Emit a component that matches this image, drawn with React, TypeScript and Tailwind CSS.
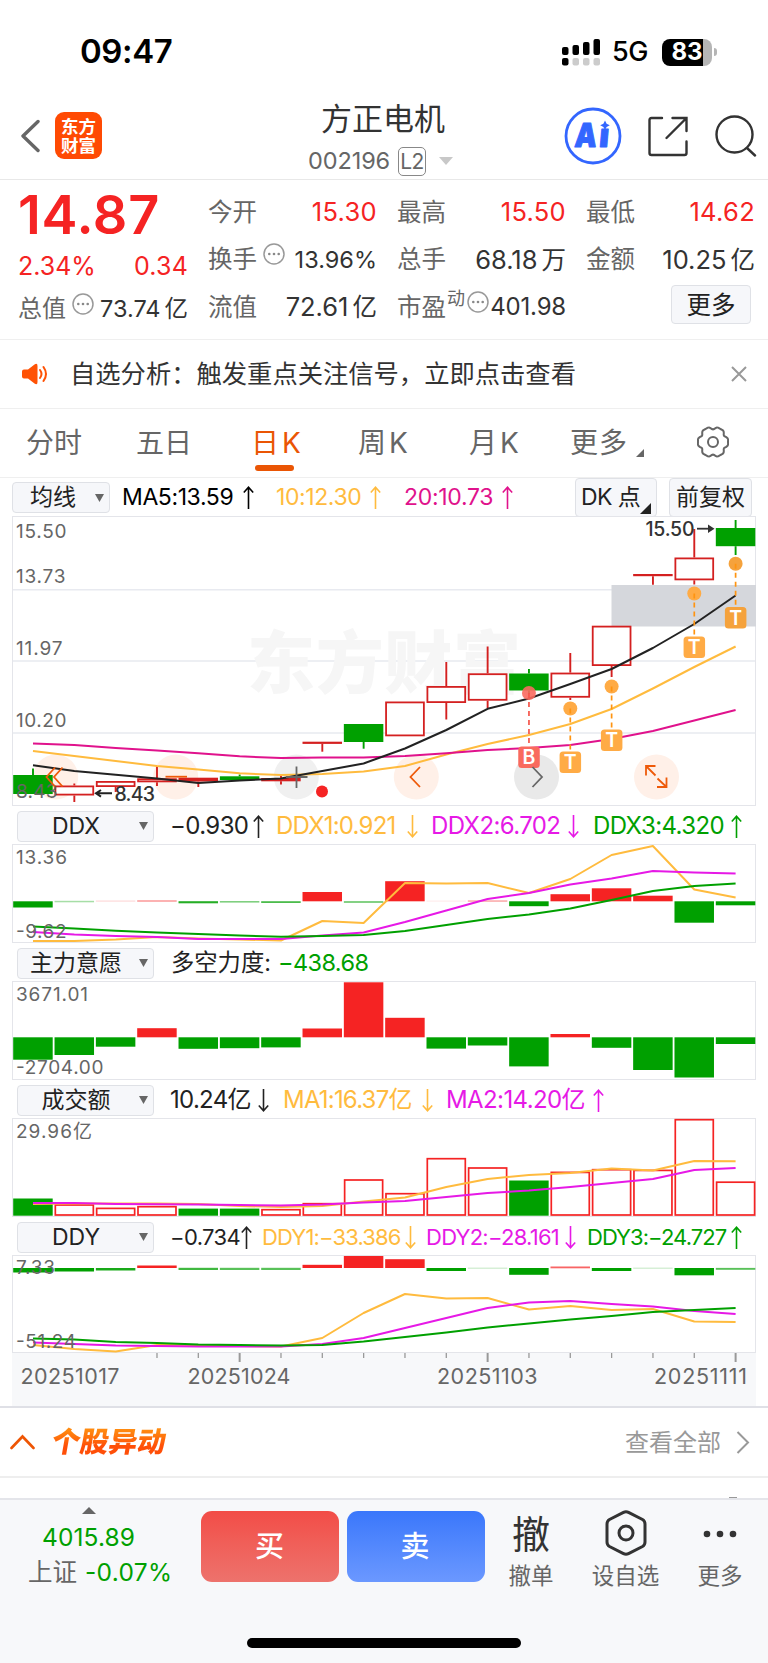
import React from 'react';

const GREEN = '#00a000';
const RED = '#f52323';
const CANDLE = '#d42020';
const YELLOW = '#ffbb3e';
const MAGENTA = '#e619e6';
const PINK = '#e0128c';

const STEP = 41.33;
const cx = (i: number) => 33 + STEP * i;
const line = (ys: number[]) => ys.map((y, i) => `${cx(i).toFixed(1)},${y}`).join(' ');

type Candle = { top: number; bottom: number; high?: number; low?: number; up?: boolean; flat?: boolean };

const candles: Candle[] = [
  { top: 775, bottom: 794, high: 768.5 },
  { top: 785.5, bottom: 795.5, high: 783.5, low: 802, up: true },
  { top: 781, bottom: 787, low: 792, up: true },
  { top: 778.3, bottom: 782.3, high: 766, low: 786, up: true },
  { top: 777.7, bottom: 781.5, low: 787, up: true, flat: true },
  { top: 776.3, bottom: 780, high: 774.5 },
  { top: 778, bottom: 781.3, high: 776, low: 784.5, up: true, flat: true },
  { top: 741.7, bottom: 743.9, low: 751.7, up: true, flat: true },
  { top: 724, bottom: 742, low: 748.7 },
  { top: 701.5, bottom: 736.3, up: true },
  { top: 686, bottom: 703, high: 662, low: 719.5, up: true },
  { top: 673.3, bottom: 700.7, high: 646.5, low: 708, up: true },
  { top: 673.5, bottom: 690.5, high: 669, low: 694 },
  { top: 672.6, bottom: 697.7, high: 653, low: 700, up: true },
  { top: 625.7, bottom: 666, low: 677, up: true },
  { top: 574, bottom: 576.2, low: 584.7, up: true, flat: true },
  { top: 557.5, bottom: 580.3, high: 529, low: 584.5, up: true },
  { top: 528, bottom: 546.2, high: 520, low: 555 },
];

const ma5 = [765.3, 771, 774.7, 778.5, 783, 780.5, 778.5, 771, 763.5, 748.5, 730, 708.8, 698.5, 684, 669, 648, 624, 595.5];
const ma10 = [751, 756, 761, 766, 769.5, 773.3, 775, 774, 771.5, 766, 754.5, 744, 735, 724, 709, 688.5, 667, 646.5];
const ma20 = [743.5, 745, 748, 750.5, 753.3, 756.3, 758, 757.6, 757.6, 756, 753.3, 750, 748, 745, 739, 731, 720.5, 710];

const signals = [
  { i: 12, dot: 693, box: 746.5, t: 'B', c: '#f96a5e' },
  { i: 13, dot: 708.5, box: 751.5, t: 'T', c: '#ffab45' },
  { i: 14, dot: 686.5, box: 729.5, t: 'T', c: '#ffab45' },
  { i: 16, dot: 593.5, box: 636.5, t: 'T', c: '#ffab45' },
  { i: 17, dot: 563.7, box: 607, t: 'T', c: '#f5a23c' },
];

type Bar = [number, number, string, number?];

const ddxBars: Bar[] = [
  [901.3, 907.5, GREEN], [900.8, 902.3, GREEN, 0.35], [900.4, 901.8, RED, 0.15], [900, 902, RED, 0.35],
  [901.2, 903.3, GREEN, 0.85], [901, 902.6, GREEN, 0.5], [901.2, 903, GREEN, 0.7], [892, 901.3, RED],
  [901.2, 902.8, GREEN, 0.6], [881.2, 901.3, RED], [900.6, 901.6, RED, 0.1], [900.3, 901.8, RED, 0.4],
  [901.3, 906.2, GREEN], [894.2, 901.3, RED], [888.3, 901.3, RED], [895.7, 901.3, RED], [901.3, 922.7, GREEN], [901.3, 905.3, GREEN],
];

const forceBars: Bar[] = [
  [1037.3, 1059.7, GREEN], [1037.3, 1055, GREEN], [1037.3, 1046.7, GREEN], [1028.2, 1037.3, RED], [1037.3, 1048.8, GREEN],
  [1037.3, 1048.2, GREEN], [1037.3, 1047.4, GREEN], [1028.5, 1037.3, RED], [982.3, 1037.3, RED], [1017.8, 1037.3, RED],
  [1037.3, 1048.6, GREEN], [1037.3, 1045.5, GREEN], [1037.3, 1066.4, GREEN], [1034, 1037.3, RED], [1037.3, 1047.8, GREEN],
  [1037.3, 1070, GREEN], [1037.3, 1077.5, GREEN], [1037.3, 1044, GREEN],
];

const volumes: [number, boolean][] = [
  [1198.5, false], [1204.3, true], [1207.7, true], [1206, true], [1208.6, false], [1208.6, false], [1209, true], [1203, true], [1179.3, true],
  [1193, true], [1158, true], [1167.3, true], [1180.5, false], [1171.7, true], [1169, true], [1169.7, true], [1119, true], [1181.5, true],
];

const ddyBars: Bar[] = [
  [1268, 1272.5, GREEN], [1268, 1271.5, GREEN], [1268, 1270.5, GREEN, 0.9], [1265.5, 1268, RED], [1267.8, 1270, GREEN, 0.75],
  [1267.8, 1270, GREEN, 0.65], [1267.8, 1270, GREEN, 0.65], [1264.8, 1268, RED], [1256, 1268, RED], [1259.2, 1268, RED],
  [1268, 1271, GREEN], [1267.6, 1268.8, GREEN, 0.2], [1268, 1274.8, GREEN], [1266.5, 1268.3, RED, 0.7], [1268, 1271, GREEN],
  [1267.6, 1268.8, GREEN, 0.2], [1268, 1275.3, GREEN], [1267.9, 1269.8, GREEN, 0.65],
];

const Bars: React.FC<{ data: Bar[] }> = ({ data }) => (
  <>
    {data.map(([y1, y2, fill, opacity], i) => (
      <rect key={i} x={cx(i) - 19.8} y={y1} width={39.5} height={y2 - y1} fill={fill} opacity={opacity ?? 1} />
    ))}
  </>
);

const Curve: React.FC<{ ys: number[]; color: string }> = ({ ys, color }) => (
  <polyline points={line(ys)} fill="none" stroke={color} strokeWidth={2} strokeLinejoin="round" />
);

const AxisText: React.FC<{ x: number; y: number; w: number; size?: number; children: string }> = ({ x, y, w, size = 19, children }) => (
  <text x={x} y={y} textLength={w} fontSize={size} fill="#666">{children}</text>
);

const Panel: React.FC<{ top: number; height: number; children: React.ReactNode }> = ({ top, height, children }) => (
  <svg className="block w-[768px]" height={height} viewBox={`0 ${top} 768 ${height}`}>
    <rect x={12.5} y={top + 0.5} width={743} height={height - 1} fill="#fff" stroke="#e4e5ea" />
    {children}
  </svg>
);

const Picker: React.FC<{ label: string }> = ({ label }) => (
  <div className="flex h-[31px] w-[137px] shrink-0 items-center rounded-[4px] border border-[#dfe1e6] bg-[#f6f7fa] text-[23px] text-[#222]">
    <span className="w-[116px] text-center leading-none">{label}</span>
    <svg width="9" height="8" viewBox="0 0 9 8" className="ml-[5px]"><path d="M0 0h9L4.500 8z" fill="#666" /></svg>
  </div>
);

const Arrow: React.FC<{ down?: boolean; className?: string }> = ({ down, className = '' }) => (
  <svg width="11" height="23" viewBox="0 0 11 23" className={`shrink-0 ${className}`} fill="none" stroke="currentColor" strokeWidth="1.6">
    <path d={down ? 'M5.500 0v22M.8 16.500l4.700 5.200 4.700-5.200' : 'M5.500 23V1M.8 6.500l4.700-5.200 4.700 5.200'} />
  </svg>
);

const More: React.FC<{ className?: string }> = ({ className = '' }) => (
  <svg width="22" height="22" viewBox="0 0 22 22" className={`shrink-0 ${className}`}>
    <circle cx="11" cy="11" r="10" fill="none" stroke="#999" strokeWidth="1.500" />
    <g fill="#888"><circle cx="6.300" cy="11" r="1.300" /><circle cx="11" cy="11" r="1.300" /><circle cx="15.700" cy="11" r="1.300" /></g>
  </svg>
);

// six wide lobes with narrow dips between them
const gear = Array.from({ length: 73 }, (_, k) => {
  const a = (k * 5 * Math.PI) / 180;
  const r = 14.4 + 1.2 * Math.cos(6 * a) - 0.6 * Math.cos(12 * a);
  return `${k ? 'L' : 'M'}${(16 + r * Math.cos(a)).toFixed(2)} ${(16 + r * Math.sin(a)).toFixed(2)}`;
}).join('') + 'Z';

const Header: React.FC = () => (
  <header className="h-[180px] border-b border-[#e8e8e8]">
    <div className="flex h-[104px] items-center">
      <span className="ml-[80px] w-[480px] text-[33px] font-semibold tracking-[-0.4px] text-black">09:47</span>
      <svg width="42" height="28" viewBox="0 0 42 28" className="ml-px">
        <g fill="#000">
          <rect x="1" y="9" width="6.500" height="8" rx="2" /><rect x="11.500" y="7" width="6.500" height="10" rx="2" />
          <rect x="22" y="4" width="6.500" height="13" rx="2" /><rect x="32.500" y="1" width="6.500" height="16" rx="2" />
          <rect x="1" y="20" width="6.500" height="7.500" rx="2" />
        </g>
        <g fill="#ccc">
          <rect x="11.500" y="20" width="6.500" height="7.500" rx="2" /><rect x="22" y="20" width="6.500" height="7.500" rx="2" />
          <rect x="32.500" y="20" width="6.500" height="7.500" rx="2" />
        </g>
      </svg>
      <span className="ml-[9px] w-[40px] pt-px text-[27px] font-medium tracking-[-0.5px] text-black">5G</span>
      <div className="ml-[10px] flex h-[27px] w-[50px] items-center justify-center rounded-[8px] bg-linear-to-r from-black from-[82%] to-[#b5b5b5] to-[82%] text-[24px] font-bold leading-none text-white">83</div>
      <div className="ml-[2px] h-[8px] w-[3px] rounded-r-full bg-[#b5b5b5]" />
    </div>
    <div className="flex h-[75px]">
      <svg width="20" height="34" viewBox="0 0 20 34" className="ml-[20px] mt-[15px]" fill="none" stroke="#666" strokeWidth="3.400" strokeLinecap="round" strokeLinejoin="round">
        <path d="M18 2.500 3 17l15 14.500" />
      </svg>
      <div className="ml-[15px] mt-[8px] flex h-[47px] w-[47px] flex-col items-center justify-center rounded-[9px] bg-[#ff4a03] text-[17.500px] font-bold leading-[19px] text-white">
        <span>东方</span><span>财富</span>
      </div>
      <div className="ml-[196px] flex w-[170px] flex-col items-center">
        <div className="mt-[-3px] text-[31px] leading-[36px] text-[#333]">方正电机</div>
        <div className="mt-[9px] flex items-center self-start pl-[10px] text-[23.500px] leading-[30px] text-[#666]">
          <span className="tracking-[-0.1px]">002196</span>
          <span className="ml-[8px] flex h-[29px] w-[28px] items-center justify-center rounded-[5px] border border-[#888] text-[21px] leading-none tracking-[-0.5px]">L2</span>
          <svg width="14" height="8" viewBox="0 0 14 8" className="ml-[13px]"><path d="M0 0h14L7 8z" fill="#c8c8c8" /></svg>
        </div>
      </div>
      <svg width="58" height="58" viewBox="0 0 58 58" className="ml-[96px] mt-[3px]">
        <circle cx="29" cy="29" r="27" fill="none" stroke="#3366ff" strokeWidth="2.800" />
        <g fill="#3366ff" stroke="#3366ff" strokeWidth="1" strokeLinejoin="round" transform="translate(2.500 0) skewX(-5)" fontSize="33" fontWeight="900">
          <text x="11" y="40.500" textLength="22" lengthAdjust="spacingAndGlyphs">A</text>
          <text x="35.500" y="40.500">ı</text>
        </g>
        <path d="M41 13.500l1.600 3.200 3.200 1.600-3.200 1.600-1.600 3.200-1.600-3.200-3.200-1.600 3.200-1.600z" fill="#3366ff" />
      </svg>
      <svg width="42" height="42" viewBox="0 0 42 42" className="ml-[25px] mt-[11px]" fill="none" stroke="#333" strokeWidth="2.400" strokeLinecap="round">
        <path d="M15 3H4.500Q2.500 3 2.500 5v33q0 2 2 2H37.500q2 0 2-2V26.500M25.500 3H39.500V16M38.500 4 19.500 23" />
      </svg>
      <svg width="42" height="42" viewBox="0 0 42 42" className="ml-[26px] mt-[11px]" fill="none" stroke="#333" strokeWidth="2.400" strokeLinecap="round">
        <circle cx="19.500" cy="19.500" r="18" /><path d="M32 33l8 7.500" />
      </svg>
    </div>
  </header>
);

const Cell: React.FC<{ label: string; value: string; unit?: string; red?: boolean }> = ({ label, value, unit, red }) => (
  <div className="flex h-[47.500px] items-center justify-between">
    <span className="text-[#666]">{label}</span>
    <span className={red ? 'text-[25.500px] tracking-[0.3px] text-[#f52323]' : 'text-[25.500px] text-[#333]'}>
      {value}{unit && <span className="ml-[4px] text-[24.500px]">{unit}</span>}
    </span>
  </div>
);

const Quote: React.FC = () => (
  <section className="grid h-[160px] grid-cols-[170px_169px_169px_169px] gap-x-5 border-b border-[#efefef] pl-[18px] pt-[8px] text-[24.500px] leading-none">
    <div>
      <div className="h-[54px] text-[54px] font-semibold leading-[54px] tracking-[0.7px] text-[#f52323]">14.87</div>
      <div className="flex h-[48px] items-center justify-between pt-px text-[25px] text-[#f52323]"><span>2.34%</span><span className="tracking-[0.2px]">0.34</span></div>
      <div className="flex h-[37px] items-center text-[#333]">
        <span className="text-[24px] text-[#666]">总值</span><More className="-mt-[10px] ml-[6px]" />
        <span className="ml-auto whitespace-nowrap text-[23.500px]">73.74<span className="ml-[4px]">亿</span></span>
      </div>
    </div>
    <div>
      <Cell label="今开" value="15.30" red />
      <div className="flex h-[47.500px] items-center text-[#333]">
        <span className="text-[#666]">换手</span><More className="-mt-[10px] ml-[6px]" />
        <span className="ml-auto text-[23.500px]">13.96%</span>
      </div>
      <Cell label="流值" value="72.61" unit="亿" />
    </div>
    <div>
      <Cell label="最高" value="15.50" red />
      <Cell label="总手" value="68.18" unit="万" />
      <div className="flex h-[47.500px] items-center text-[#333]">
        <span className="text-[#666]">市盈</span><span className="-mt-[16px] ml-px text-[18px] text-[#666]">动</span><More className="-mt-[10px] ml-[2px]" />
        <span className="ml-auto text-[24px] tracking-[-0.2px]">401.98</span>
      </div>
    </div>
    <div>
      <Cell label="最低" value="14.62" red />
      <Cell label="金额" value="10.25" unit="亿" />
      <div className="ml-[85px] mt-[2px] flex h-[39px] w-[80px] items-center justify-center rounded-[4px] border border-[#dfe1e6] bg-[#f6f7fa] pt-px text-[#222]">更多</div>
    </div>
  </section>
);

const Notice: React.FC = () => (
  <section className="flex h-[69px] items-center border-b border-[#efefef] text-[25.300px] leading-none text-[#333]">
    <svg width="26" height="22" viewBox="0 0 26 22" className="ml-[22px] shrink-0">
      <path d="M0 8.500Q0 6.500 2 6.500H6L12.500 1.500Q15.500-.5 15.500 3v16q0 3.500-3 1.500L6 15.500H2q-2 0-2-2z" fill="#ff5205" />
      <path d="M18 7q3 4 0 8M21.500 4q5 7 0 14" fill="none" stroke="#ff5205" strokeWidth="2" strokeLinecap="round" />
    </svg>
    <span className="ml-[22px] whitespace-nowrap">自选分析：触发重点关注信号，立即点击查看</span>
    <svg width="16" height="16" viewBox="0 0 16 16" className="ml-auto mr-[21px]" stroke="#999" strokeWidth="2"><path d="M1 1l14 14M15 1 1 15" /></svg>
  </section>
);

const Tabs: React.FC = () => (
  <nav className="flex h-[69px] border-b border-[#efefef] pt-[14px] text-[28px] leading-[40px] text-[#666]">
    <span className="ml-[26px] w-[110px]">分时</span>
    <span className="w-[115px]">五日</span>
    <div className="w-[107px] text-[#ea5504]">
      <div className="flex gap-[3px]"><span>日</span><span>K</span></div>
      <div className="ml-[4px] mt-[2px] h-[6px] w-[39px] rounded-full bg-[#ea5504]" />
    </div>
    <div className="flex w-[111px] gap-[3px]"><span>周</span><span>K</span></div>
    <div className="flex w-[101px] gap-[3px]"><span>月</span><span>K</span></div>
    <span className="tracking-[1px]">更多</span>
    <svg width="8" height="8" viewBox="0 0 8 8" className="ml-[8px] mt-[26px]"><path d="M8 0v8H0z" fill="#666" /></svg>
    <svg width="32" height="32" viewBox="0 0 32 32" className="ml-[53px] mt-[3px]" fill="none" stroke="#666" strokeWidth="2">
      <path d={gear} /><circle cx="16" cy="16" r="5" />
    </svg>
  </nav>
);

const PriceChart: React.FC = () => (
  <Panel top={516} height={290}>
    <g stroke="#e8eaf0" strokeWidth={1.5}>
      <path d="M13 589.700H755M13 661H755M13 733H755" />
    </g>
    <text x={247} y={688} textLength={274} fontSize={68} fontWeight={900} fill="#f6f6f6">东方财富</text>
    <rect x={611.5} y={585} width={144.500} height={41.500} fill="#d5d7dc" />
    {[55.7, 175.7, 416.3, 656.5].map((x) => <circle key={x} cx={x} cy={777} r={22.500} fill="#fff0e8" />)}
    <circle cx={296.300} cy={777} r={22.500} fill="#f0f0f0" />
    <circle cx={536.500} cy={777} r={22.500} fill="#e9e9e9" />
    {candles.map((c, i) => {
      const color = c.up ? CANDLE : GREEN;
      const hollow = c.up && !c.flat;
      return (
        <g key={i}>
          {c.high && <path d={`M${cx(i)} ${c.high}V${c.top}`} stroke={color} strokeWidth={1.9} />}
          {c.low && <path d={`M${cx(i)} ${c.bottom}V${c.low}`} stroke={color} strokeWidth={1.9} />}
          {hollow
            ? <rect x={cx(i) - 18.9} y={c.top + 0.9} width={37.8} height={c.bottom - c.top - 1.8} fill="#fff" stroke={color} strokeWidth={1.8} />
            : <rect x={cx(i) - 19.8} y={c.top} width={39.500} height={c.bottom - c.top} fill={color} />}
        </g>
      );
    })}
    <Curve ys={ma10} color={YELLOW} />
    <Curve ys={ma20} color={PINK} />
    <Curve ys={ma5} color="#222" />
    <AxisText x={16} y={537.700} w={50.500}>15.50</AxisText>
    <AxisText x={16} y={582.500} w={49.500}>13.73</AxisText>
    <AxisText x={16} y={654.500} w={46.500}>11.97</AxisText>
    <AxisText x={16} y={726.500} w={50.500}>10.20</AxisText>
    <AxisText x={16} y={798} w={41.500}>8.43</AxisText>
    <path d="M96 793.300h16M101 790l-5 3.300 5 3.300" stroke="#222" strokeWidth={2} fill="none" />
    <text x={114.500} y={800.500} textLength={40.500} fontSize={19.500} fontWeight={500} fill="#333">8.43</text>
    <text x={645.500} y={535.500} textLength={49} fontSize={19.500} fontWeight={500} fill="#333">15.50</text>
    <path d="M697 528.700h13" stroke="#333" strokeWidth={1.800} />
    <path d="M708 524.500l6.500 4.200-6.500 4.200z" fill="#333" />
    <circle cx={322} cy={791.500} r={6} fill={RED} />
    {signals.map((s) => (
      <g key={s.i}>
        <circle cx={cx(s.i)} cy={s.dot} r={7} fill={s.c} opacity={s.t === 'B' ? 0.9 : 1} />
        <path d={`M${cx(s.i)} ${s.dot}V${s.box}`} stroke={s.t === 'B' ? '#f5564a' : '#ff9410'} strokeWidth={1.700} strokeDasharray="5 4" />
        <rect x={cx(s.i) - 10.700} y={s.box} width={21.500} height={21.500} rx={3.500} fill={s.c} />
        <text x={cx(s.i)} y={s.box + 17.500} textAnchor="middle" fontSize={19.500} fontWeight={600} fill="#fff">{s.t}</text>
      </g>
    ))}
    <g fill="none" stroke="#ee5a0a" strokeWidth={1.800}>
      <path d="M55 767.500 46.500 777l8.500 9.500M62.500 767.500 54 777l8.500 9.500" />
      <path d="M165.500 776.700h21.500" />
      <path d="M420 767 410.500 777l9.500 10" />
      <path d="M646 775.500v-9.500h9.500M646.500 766.500l9 9M666.500 787h-9M666.500 777.500v9.500h-9.500M657.500 778.500l9 8.500" />
    </g>
    <path d="M296.500 766.500v21.500M286 777h21.500" stroke="#666" strokeWidth={1.800} />
    <path d="M532.500 767l9.500 10-9.500 10" fill="none" stroke="#666" strokeWidth={1.800} />
  </Panel>
);

const majorTicks = [5, 11, 17];

const App: React.FC = () => (
  <div className="h-[1663px] w-[768px] overflow-hidden bg-white font-['Inter','Noto_Sans_CJK_SC',sans-serif]">
    <Header />
    <Quote />
    <Notice />
    <Tabs />

    <div className="flex h-[38px] text-[23px] leading-none">
      <div className="ml-[12px] mt-[4px] flex h-[31px] w-[98px] items-center rounded-[4px] border border-[#dfe1e6] bg-[#f6f7fa] text-[#222]">
        <span className="ml-[17px] w-[65px]">均线</span>
        <svg width="9" height="8" viewBox="0 0 9 8"><path d="M0 0h9L4.500 8z" fill="#666" /></svg>
      </div>
      <div className="ml-[12px] flex h-[39px] w-[154px] items-center text-black"><span className="w-[121px] whitespace-nowrap tracking-[-0.4px]">MA5:13.59</span><Arrow /></div>
      <div className="flex h-[39px] w-[128px] items-center text-[#ffbb3e]"><span className="w-[94px] whitespace-nowrap tracking-[-0.4px]">10:12.30</span><Arrow /></div>
      <div className="flex h-[39px] w-[171px] items-center text-[#e0128c]"><span className="w-[98px] whitespace-nowrap tracking-[-0.3px]">20:10.73</span><Arrow /></div>
      <div className="flex h-[39px] w-[82px] shrink-0 justify-between rounded-[4px] border border-[#dfe1e6] bg-[#f6f7fa] pl-[5px] pr-[5px] text-[#222]">
        <span className="self-center whitespace-nowrap tracking-[-0.6px]">DK 点</span>
        <svg width="11" height="11" viewBox="0 0 11 11" className="-ml-[6px] mb-[2px] shrink-0 self-end"><path d="M11 0v11H0z" fill="#222" /></svg>
      </div>
      <div className="ml-[12px] flex h-[39px] w-[83px] shrink-0 items-center justify-center rounded-[4px] border border-[#dfe1e6] bg-[#f6f7fa] text-[#222]">前复权</div>
    </div>
    <PriceChart />

    <div className="flex h-[38px] items-center whitespace-nowrap pb-px pl-[17px] pt-[3px] text-[24px] leading-none">
      <Picker label="DDX" />
      <div className="ml-[16px] flex w-[106px] items-center text-[#222]"><span className="w-[83px] tracking-[-0.6px]">−0.930</span><Arrow /></div>
      <div className="flex w-[155px] items-center text-[#ffbb3e]"><span className="w-[131px] tracking-[-0.8px]">DDX1:0.921</span><Arrow down /></div>
      <div className="flex w-[162px] items-center text-[#e619e6]"><span className="w-[137px] tracking-[-0.6px]">DDX2:6.702</span><Arrow down /></div>
      <div className="flex items-center text-[#00a000]"><span className="w-[138px] tracking-[-0.6px]">DDX3:4.320</span><Arrow /></div>
    </div>
    <Panel top={844} height={99}>
      <Bars data={ddxBars} />
      <Curve color={YELLOW} ys={[941, 941, 939.5, 937, 938.5, 939.5, 940.5, 921, 923, 883, 883.5, 883, 893, 879, 855, 846, 889.5, 897.5]} />
      <Curve color={MAGENTA} ys={[932, 934.5, 936, 937, 939, 939, 939, 935.5, 932.5, 922, 910.5, 899, 893, 884.5, 878.5, 871, 872.5, 873.5]} />
      <Curve color={GREEN} ys={[926.5, 928.5, 930.7, 932.5, 934, 935.5, 936.7, 936, 935, 931, 925, 919, 914.5, 908.5, 900, 891, 886, 883.5]} />
      <AxisText x={16} y={864} w={51}>13.36</AxisText>
      <AxisText x={16} y={937.700} w={50.500}>-9.62</AxisText>
    </Panel>

    <div className="flex h-[38px] items-center pb-px pl-[17px] pt-[3px] text-[23.500px] leading-none">
      <Picker label="主力意愿" />
      <span className="ml-[17px] w-[107px] whitespace-nowrap text-[23.300px] text-[#222]">多空力度:</span>
      <span className="tracking-[-0.6px] text-[#00a000]">−438.68</span>
    </div>
    <Panel top={981} height={99}>
      <Bars data={forceBars} />
      <AxisText x={16} y={1001} w={72}>3671.01</AxisText>
      <AxisText x={16} y={1074} w={87.500}>-2704.00</AxisText>
    </Panel>

    <div className="flex h-[38px] items-center whitespace-nowrap pb-px pl-[17px] pt-[3px] text-[24px] leading-none">
      <Picker label="成交额" />
      <div className="ml-[16px] flex w-[113px] items-center text-[#222]"><span className="w-[88px] tracking-[-0.7px]">10.24亿</span><Arrow down /></div>
      <div className="flex w-[163px] items-center text-[#ffbb3e]"><span className="w-[139px] tracking-[-0.8px]">MA1:16.37亿</span><Arrow down /></div>
      <div className="flex items-center text-[#e619e6]"><span className="w-[147px] tracking-[-0.6px]">MA2:14.20亿</span><Arrow /></div>
    </div>
    <Panel top={1118} height={99}>
      {volumes.map(([y, hollow], i) => hollow
        ? <rect key={i} x={cx(i) - 19} y={y + 0.7} width={38} height={1215 - y - 0.7} fill="#fff" stroke={RED} strokeWidth={1.700} />
        : <rect key={i} x={cx(i) - 19.8} y={y} width={39.500} height={1215.7 - y} fill={GREEN} />)}
      <Curve color={YELLOW} ys={[1204, 1203.5, 1203.5, 1203.5, 1204, 1206, 1207, 1206, 1201.5, 1197.5, 1187, 1179, 1175, 1173, 1168.5, 1170.5, 1161, 1161.2]} />
      <Curve color={MAGENTA} ys={[1203, 1203, 1204, 1204.2, 1204.5, 1205, 1205.5, 1204.5, 1202.5, 1201, 1197, 1193, 1190.5, 1187, 1183, 1179, 1170, 1168]} />
      <AxisText x={16} y={1138} w={76}>29.96亿</AxisText>
    </Panel>

    <div className="flex h-[38px] items-center whitespace-nowrap pb-px pl-[17px] pt-[3px] text-[22px] leading-none">
      <Picker label="DDY" />
      <div className="ml-[16px] flex w-[92px] items-center text-[#222]"><span className="w-[71px] tracking-[-0.6px]">−0.734</span><Arrow /></div>
      <div className="flex w-[164px] items-center text-[#ffbb3e]"><span className="w-[143px] tracking-[-0.85px]">DDY1:−33.386</span><Arrow down /></div>
      <div className="flex w-[161px] items-center text-[#e619e6]"><span className="w-[139px] tracking-[-0.75px]">DDY2:−28.161</span><Arrow down /></div>
      <div className="flex items-center text-[#00a000]"><span className="w-[144px] tracking-[-0.95px]">DDY3:−24.727</span><Arrow /></div>
    </div>
    <Panel top={1255} height={98}>
      <Bars data={ddyBars} />
      <Curve color={YELLOW} ys={[1345, 1349, 1351.5, 1345, 1345, 1346, 1346.5, 1338, 1313, 1294, 1298.5, 1298, 1309.5, 1306, 1310, 1309, 1321.5, 1322]} />
      <Curve color={MAGENTA} ys={[1342.5, 1344, 1345.5, 1346, 1346.5, 1346.5, 1346.5, 1344, 1338, 1328, 1318, 1308, 1302.5, 1301, 1304, 1306.5, 1311, 1314]} />
      <Curve color={GREEN} ys={[1338.5, 1339.5, 1342, 1343, 1344.5, 1345, 1345.5, 1345, 1341.5, 1337, 1332.5, 1327.5, 1323.5, 1319.5, 1316, 1312, 1310, 1308]} />
      <AxisText x={16} y={1274} w={39}>7.33</AxisText>
      <AxisText x={16} y={1348} w={60}>-51.24</AxisText>
    </Panel>
    <svg className="block w-[768px]" height={53} viewBox="0 1353 768 53">
      <rect x={12} y={1353} width={744} height={53} fill="#f7f8fa" />
      {Array.from({ length: 15 }, (_, k) => k + 3).map((i) => (
        <path key={i} d={`M${cx(i)} 1353V${majorTicks.includes(i) ? 1362 : 1358}`} stroke="#999" strokeWidth={majorTicks.includes(i) ? 2 : 1.300} />
      ))}
      <AxisText x={20.500} y={1383.700} w={99} size={21.500}>20251017</AxisText>
      <AxisText x={187.500} y={1383.700} w={103} size={21.500}>20251024</AxisText>
      <AxisText x={437} y={1383.700} w={100.500} size={21.500}>20251103</AxisText>
      <AxisText x={654} y={1383.700} w={93} size={21.500}>20251111</AxisText>
    </svg>

    <section className="flex h-[72px] items-center border-b-2 border-t-2 border-b-[#eee] border-t-[#dfe0e6]">
      <svg width="26" height="16" viewBox="0 0 26 16" className="ml-[9px]" fill="none" stroke="#ee5504" strokeWidth="2.600" strokeLinecap="round"><path d="M2.500 14 13.500 2.500 24.500 14" /></svg>
      <span className="ml-[17px] -skew-x-10 bg-linear-to-b from-[#ff8a10] from-20% to-[#ff4f08] to-60% bg-clip-text text-[28.500px] font-black leading-[40px] text-transparent">个股异动</span>
      <span className="ml-auto pt-px text-[24px] text-[#999]">查看全部</span>
      <svg width="14" height="23" viewBox="0 0 14 23" className="ml-[15px] mr-[18px]" fill="none" stroke="#999" strokeWidth="2"><path d="M1.500 1 12 11.500 1.500 22" /></svg>
    </section>
    <div className="flex h-[20px] items-end justify-end pr-[31px]"><div className="h-px w-[8px] bg-[#999]" /></div>

    <footer className="h-[165px] border-t-2 border-[#e4e5ea] bg-[#f7f8fa]">
      <div className="flex h-[138px]">
        <div className="ml-[28px] flex w-[173px] flex-col text-[24.500px] leading-none">
          <svg width="14" height="7" viewBox="0 0 14 7" className="ml-[54px] mt-[7px]"><path d="M7 0l7 7H0z" fill="#666" /></svg>
          <span className="ml-[14px] mt-[11px] tracking-[0.1px] text-[#00a000]">4015.89</span>
          <div className="mt-[10px] flex items-center text-[#666]"><span>上证</span><span className="ml-[8px] tracking-[0.3px] text-[#00a000]">-0.07%</span></div>
        </div>
        <button className="mt-[11px] h-[71px] w-[138px] rounded-[11px] bg-linear-to-b from-[#f24c47] to-[#ed726c] pr-px pt-px text-[29px] font-medium text-white">买</button>
        <button className="ml-[8px] mt-[11px] h-[71px] w-[138px] rounded-[11px] bg-linear-to-b from-[#3a77fb] to-[#6b98ff] pr-[2px] pt-px text-[29px] font-medium text-white">卖</button>
        <div className="ml-[13px] flex w-[66px] flex-col items-center">
          <span className="mt-[12px] text-[38px] leading-[44px] text-[#333]">撤</span>
          <span className="mt-[6px] text-[22.500px] leading-[28px] text-[#666]">撤单</span>
        </div>
        <div className="ml-[27px] flex w-[70px] flex-col items-center">
          <svg width="42" height="46" viewBox="0 0 42 46" className="mt-[10px]" fill="none" stroke="#333" strokeWidth="3">
            <path d="M18.500 2.300q2.500-1.300 5 0L37.500 9.500q2.500 1.500 2.500 4.500v18q0 3-2.500 4.500L23.500 43.700q-2.500 1.300-5 0L4.500 36.500Q2 35 2 32V14q0-3 2.500-4.500z" />
            <circle cx="21" cy="23" r="7" />
          </svg>
          <span className="mr-px mt-[6px] whitespace-nowrap text-[22.500px] leading-[28px] text-[#666]">设自选</span>
        </div>
        <div className="ml-[29px] flex w-[60px] flex-col items-center">
          <svg width="34" height="8" viewBox="0 0 34 8" className="mt-[30px]" fill="#333"><circle cx="4" cy="4" r="3.300" /><circle cx="17" cy="4" r="3.300" /><circle cx="30" cy="4" r="3.300" /></svg>
          <span className="mt-[24px] text-[22.500px] leading-[28px] text-[#666]">更多</span>
        </div>
      </div>
      <div className="mx-auto h-[10px] w-[274px] rounded-full bg-black" />
    </footer>
  </div>
);

export default App;
